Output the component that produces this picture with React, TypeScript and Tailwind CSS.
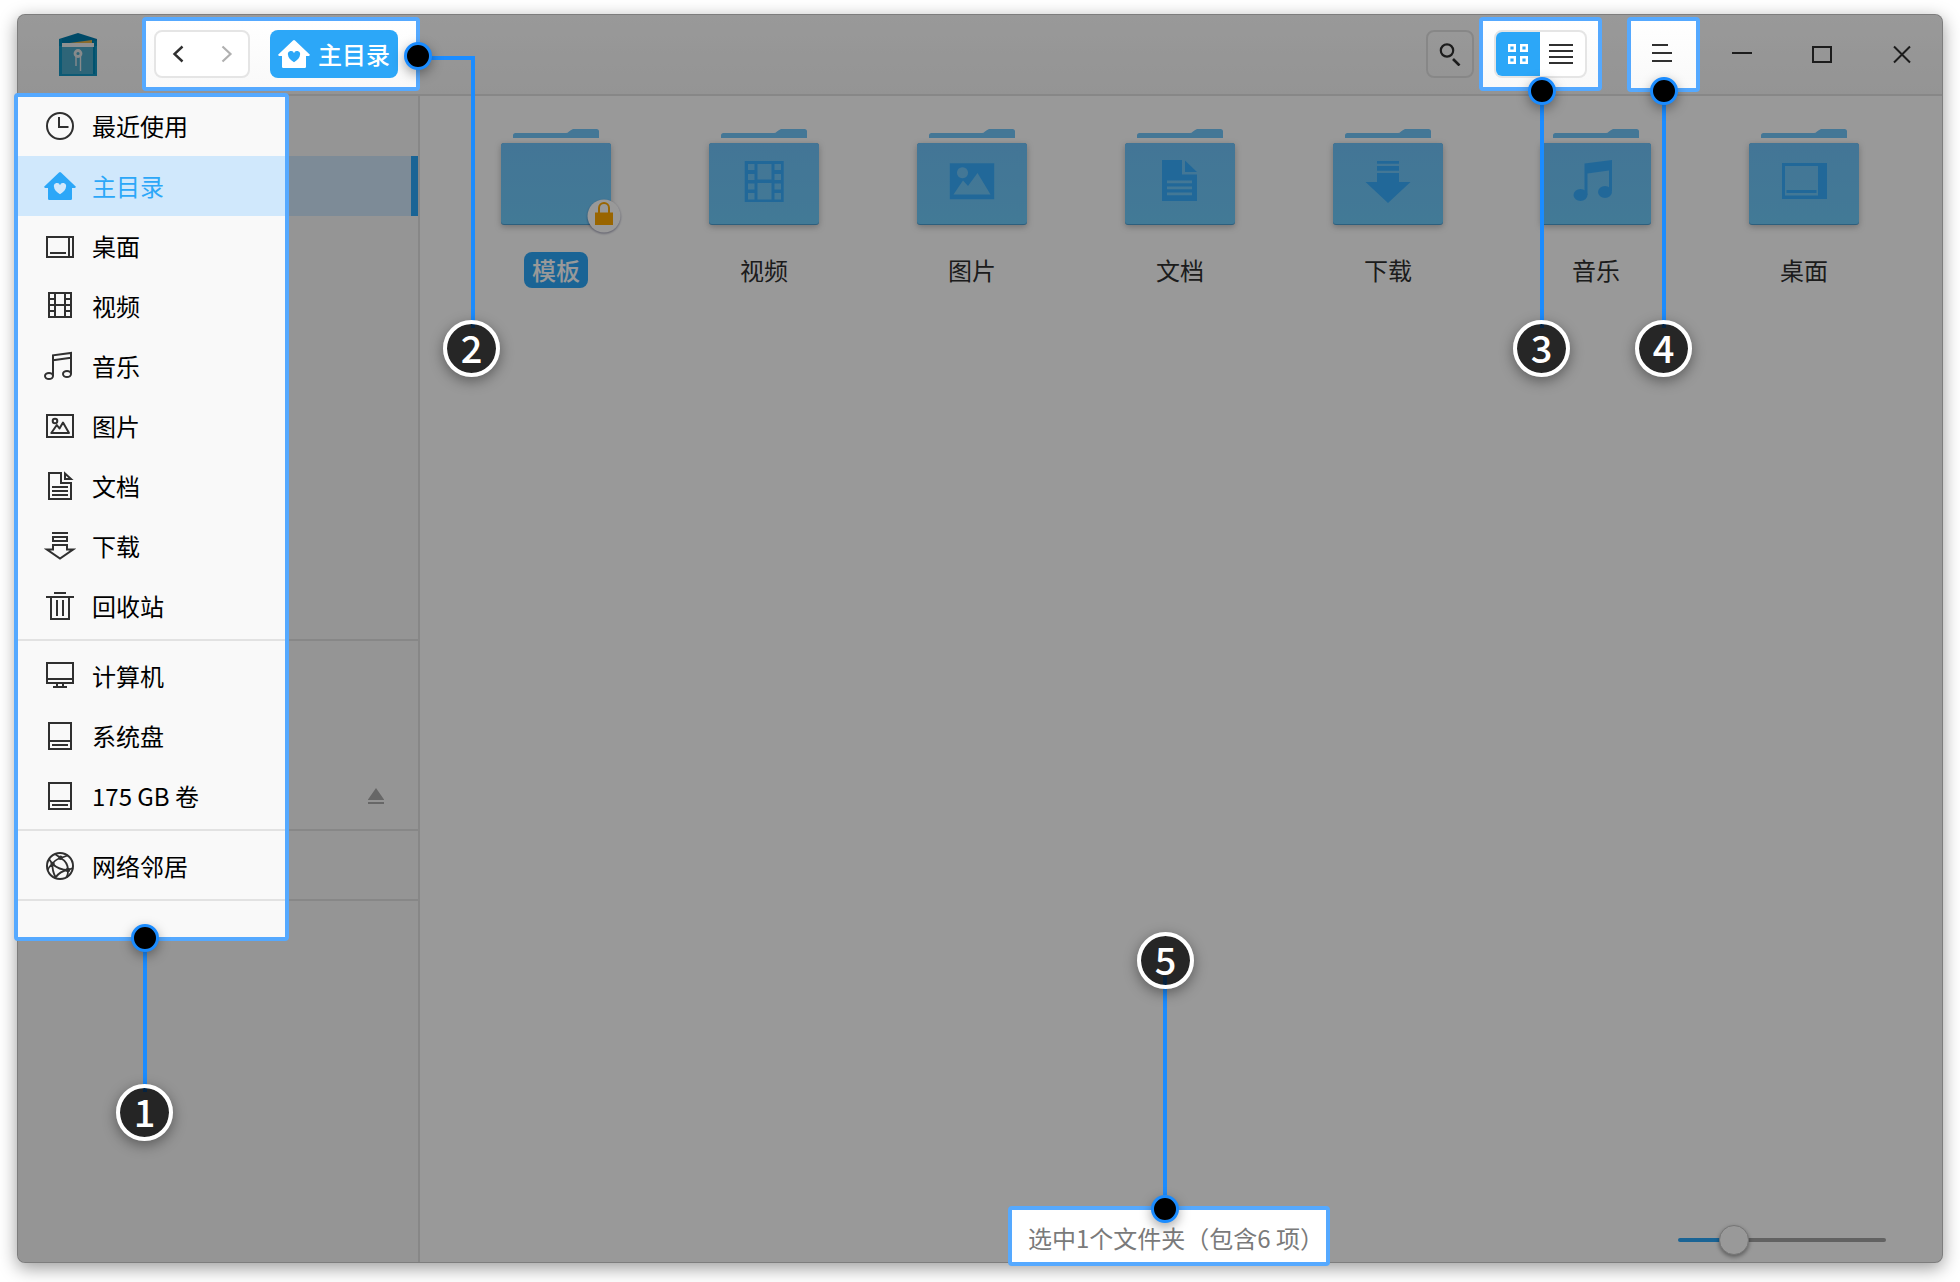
import { useState } from "react";
import type { ReactNode } from "react";

const FONT = "font-['Noto_Sans_CJK_SC',sans-serif]";

/* ---------- icons ---------- */

function LineIcon({ children, className = "" }: { children: ReactNode; className?: string }) {
  return (
    <svg viewBox="0 0 32 32" className={"size-8 shrink-0 " + className} fill="none" stroke="#303030" strokeWidth="2" aria-hidden="true">
      {children}
    </svg>
  );
}

function HomeIcon({ className = "" }: { className?: string }) {
  return (
    <svg viewBox="0 0 32 32" className={"size-8 shrink-0 " + className} aria-hidden="true">
      <path
        fill="currentColor"
        fillRule="evenodd"
        d="M15 2.400a1.400 1.400 0 0 1 2 0L31.700 16.400q.6 1.300-1 1.600H28v10.700q0 1.300-1.300 1.300H5.300Q4 30 4 28.700V18H1.300q-1.600-.3-1-1.600zM16 24.200c3.500-2.300 6-4.600 6-7.400a3 3 0 0 0-6-1.500 3 3 0 0 0-6 1.500c0 2.800 2.500 5.100 6 7.400z"
      />
    </svg>
  );
}

const icons: Record<string, ReactNode> = {
  recent: (
    <LineIcon>
      <circle cx="16" cy="16" r="13" />
      <path d="M15 7v10h9.500" />
    </LineIcon>
  ),
  home: <HomeIcon className="text-[#2ca7f8]" />,
  desktop: (
    <LineIcon>
      <rect x="3" y="7" width="26" height="20" />
      <path d="M25 7v20M6 23h16" />
    </LineIcon>
  ),
  video: (
    <LineIcon>
      <rect x="5" y="3" width="22" height="24" />
      <path d="M11 3v24M21 3v24M5 9h6M5 15h22M5 21h6M21 9h6M21 21h6" />
    </LineIcon>
  ),
  music: (
    <LineIcon>
      <path d="M9 26V5.300L27 3v21M9 10.200L27 7.800" />
      <ellipse cx="5" cy="26" rx="4" ry="3" />
      <ellipse cx="23" cy="24" rx="4" ry="3" />
    </LineIcon>
  ),
  pictures: (
    <LineIcon>
      <rect x="3" y="5" width="26" height="22" />
      <circle cx="11" cy="11" r="2.300" />
      <path d="M7.300 23l5.500-8 2.700 3.500L19 12.500 25 23z" strokeLinejoin="round" />
    </LineIcon>
  ),
  documents: (
    <LineIcon>
      <path d="M17 3H5v26h22V13H17zM21 3.500V9h6z" />
      <path d="M8 17h16M8 21h16M8 25h16" />
    </LineIcon>
  ),
  downloads: (
    <LineIcon>
      <path d="M8 3h16M9 7h14v4H9zM9 15h14v4.500h6L16 28.500 3 19.500h6z" />
    </LineIcon>
  ),
  trash: (
    <LineIcon>
      <path d="M10 3h12M2 7h28M7 7v22h18V7M13 10v16M19 10v16" />
    </LineIcon>
  ),
  computer: (
    <LineIcon>
      <path d="M3 3h26v20H3zM3 19h26M13 23v4M19 23v4M9 27h14" />
    </LineIcon>
  ),
  disk: (
    <LineIcon>
      <path d="M5 3h22v26H5zM5 21h22M8 25h16" />
    </LineIcon>
  ),
  network: (
    <LineIcon>
      <circle cx="16" cy="16" r="13" />
      <path
        strokeWidth="1.800"
        d="M11 4l5.700 4 6.800-2.500M16.500 8Q10.500 10 8.500 14M16.500 8Q24 12 24 20M8.500 14Q15 20 24 20M8.500 14L5 9M8.500 14Q4.500 17 3.800 20M8.500 14Q8 20 11.500 27.500M24 20l5-2M24 20q.3 4-1.500 7.500M24 20Q16 21 11.500 27.500"
      />
      <g fill="#303030" stroke="none">
        <circle cx="16.500" cy="7.800" r="2.200" />
        <circle cx="8.600" cy="14" r="2.200" />
        <circle cx="24" cy="20" r="2.300" />
      </g>
    </LineIcon>
  ),
};

function Logo() {
  return (
    <svg viewBox="0 0 40 44" className="h-11 w-10" aria-hidden="true">
      <path d="M1 6L20 0l19 6v8H1z" fill="#007cae" />
      <path d="M4 11l30-4v7H4z" fill="#e4b34a" />
      <path d="M1 13h38v29H1z" fill="#4ea8c8" />
      <path d="M1 6h3v36H1zM35 8h4v34h-4z" fill="#0089b8" />
      <path d="M1 13h3v29H1zM37 13h2v29h-2zM1 41h38v2H1z" fill="#1596c4" />
      <path d="M4 10h32v4H4z" fill="#eef0f2" />
      <circle cx="20" cy="20.500" r="3" fill="none" stroke="#e2e6e8" strokeWidth="2.800" />
      <path d="M18 23v10M22.500 23v15" stroke="#e2e6e8" strokeWidth="1.400" />
    </svg>
  );
}

const glyphs: Record<string, ReactNode> = {
  none: null,
  video: (
    <path
      fillRule="evenodd"
      d="M44.700 42h39v41h-39zM48 45v6h6.500v-6zM48 55v6h6.500v-6zM48 64.500v6h6.500v-6zM48 74v6.500h6.500V74zM57.500 45v15.500h14V45zM57.500 64v16.500h14V64zM74.500 45v6H81v-6zM74.500 55v6H81v-6zM74.500 64.500v6H81v-6zM74.500 74v6.500H81V74z"
    />
  ),
  pictures: (
    <path fillRule="evenodd" d="M41.800 44.200h44.400v36H41.800zM54.500 48.200a5.500 5.500 0 1 0 .01 0zM45.500 75.500h37L69.500 54 60 67l-5-5.500z" />
  ),
  documents: (
    <>
      <path fillRule="evenodd" d="M46 41h20v14.500h15V82H46zM51 61.500v2.700h25v-2.700zM51 67.500v2.700h25v-2.700zM51 73.500v2.700h25v-2.700z" />
      <path d="M69 41.500V53h12z" />
    </>
  ),
  downloads: <path d="M53 42h22v2.700H53zM53 47h22v4.700H53zM53 54h22v9h11.500L64 84 41.500 63H53z" />,
  music: (
    <>
      <path d="M52.500 44.500L80 41v31h-3V51.500l-21.500 3V76h-3z" />
      <ellipse cx="48.500" cy="76" rx="7" ry="6" />
      <ellipse cx="73" cy="73" rx="7" ry="6" />
    </>
  ),
  desktop: <path fillRule="evenodd" d="M42 44h45v36H42zM45 47v29.500h33V47zM46.500 71h30v3h-30z" />,
};

function FolderArt({ kind, locked }: { kind: string; locked?: boolean }) {
  return (
    <svg viewBox="0 0 128 112" className="h-28 w-32 overflow-visible" aria-hidden="true">
      <defs>
        <linearGradient id={"folder-" + kind} x1="0" y1="0" x2="0" y2="1">
          <stop offset="0" stopColor="#70c4fb" />
          <stop offset="1" stopColor="#6fcbfb" />
        </linearGradient>
      </defs>
      <path d="M21 18v-2.500q0-2.500 2.500-2.500H74q1.500 0 3-1.500t4-2.500h23.500q2.500 0 2.500 2.500V18z" fill="#72c6fb" />
      <path d="M15 23l3-5h92l3 5z" fill="#ffffff" />
      <g className="drop-shadow-[0_2px_3px_rgba(0,0,0,0.25)]">
        <rect x="9" y="23" width="110" height="82" rx="3" fill="#4c9ed0" />
        <rect x="9" y="23" width="110" height="81" rx="3" fill={"url(#folder-" + kind + ")"} />
      </g>
      <g fill="#38aeff" transform="translate(0 -1)">
        {glyphs[kind]}
      </g>
      {locked && (
        <>
          <circle cx="112" cy="96" r="16.500" fill="#ffffff" className="drop-shadow-[0_1px_1px_rgba(0,0,60,0.4)]" />
          <path d="M107 94v-6a5 5 0 0 1 10 0V94" fill="none" stroke="#ffa800" strokeWidth="2" />
          <path d="M103 92.500h18V105h-18z" fill="#ffa800" />
        </>
      )}
    </svg>
  );
}

/* ---------- callouts ---------- */

function Dot({ className = "" }: { className?: string }) {
  return (
    <span className={"size-7 shrink-0 rounded-full border-3 border-[#1b8cff] bg-black shadow-[0_4px_12px_rgba(0,0,0,0.35)] " + className} />
  );
}

function Badge({ n, className = "" }: { n: number; className?: string }) {
  return (
    <span
      className={
        "flex size-[57px] shrink-0 items-center justify-center rounded-full border-4 border-white bg-black/75 bg-clip-padding pb-1 text-[38px]/10 font-medium text-white shadow-[0_4px_14px_rgba(0,0,0,0.4)] " +
        className
      }
    >
      {n}
    </span>
  );
}

function CalloutDown({ n, line, className }: { n: number; line: string; className: string }) {
  return (
    <div className={"pointer-events-none absolute flex flex-col items-center " + className}>
      <Dot className="relative z-10" />
      <span className={"w-1 bg-[#1b8cff] " + line} />
      <Badge n={n} className="relative -mt-2" />
    </div>
  );
}

const SPOT = "relative z-20 border-4 border-[#55a9ff] rounded-sm";

/* ---------- data ---------- */

const groups = [
  [
    { icon: "recent", label: "最近使用" },
    { icon: "home", label: "主目录" },
    { icon: "desktop", label: "桌面" },
    { icon: "video", label: "视频" },
    { icon: "music", label: "音乐" },
    { icon: "pictures", label: "图片" },
    { icon: "documents", label: "文档" },
    { icon: "downloads", label: "下载" },
    { icon: "trash", label: "回收站" },
  ],
  [
    { icon: "computer", label: "计算机" },
    { icon: "disk", label: "系统盘" },
    { icon: "disk", label: "175 GB 卷", eject: true },
  ],
  [{ icon: "network", label: "网络邻居" }],
] as { icon: string; label: string; eject?: boolean }[][];

const folders = [
  { kind: "none", label: "模板", locked: true },
  { kind: "video", label: "视频" },
  { kind: "pictures", label: "图片" },
  { kind: "documents", label: "文档" },
  { kind: "downloads", label: "下载" },
  { kind: "music", label: "音乐" },
  { kind: "desktop", label: "桌面" },
];

/* ---------- page parts ---------- */

function Header() {
  return (
    <header className="flex shrink-0 items-start rounded-t-lg border-b-2 border-[#e2e2e2] bg-linear-to-b from-white to-[#f7f7f7]">
      <div className="mr-11 ml-10 flex h-[79px] items-center">
        <Logo />
      </div>
      <div className={SPOT + " mt-[2px] flex items-center bg-linear-to-b from-white to-[#f9f9f9] py-[9px] pr-[18px] pl-2"}>
        <div className="flex h-12 w-24 rounded-lg border-2 border-[#e5e5e5] bg-white">
          <button type="button" aria-label="后退" className="flex flex-1 items-center justify-center pr-[3px]">
            <svg viewBox="0 0 12 18" className="h-[18px] w-3" fill="none" stroke="#303030" strokeWidth="2.400">
              <path d="M10.500 1.500L2.500 9l8 7.500" />
            </svg>
          </button>
          <button type="button" aria-label="前进" className="flex flex-1 items-center justify-center pl-[3px]">
            <svg viewBox="0 0 12 18" className="h-[18px] w-3" fill="none" stroke="#b0b0b0" strokeWidth="2.200">
              <path d="M1.500 1.500L9.500 9l-8 7.500" />
            </svg>
          </button>
        </div>
        <button type="button" className="ml-5 flex h-12 items-center gap-2 rounded-lg bg-[#2ca7f8] px-2 text-2xl/9 font-medium text-white">
          <HomeIcon />
          主目录
        </button>
        <div className="pointer-events-none absolute top-[35px] left-[282px] h-[272px] w-[47px] border-t-4 border-r-4 border-[#1b8cff]" />
        <Dot className="absolute top-[21px] left-[258px]" />
        <Badge n={2} className="absolute top-[299px] left-[297px]" />
      </div>

      <div className="ml-auto flex items-start">
        <button type="button" aria-label="搜索" className="mt-[15px] mr-[5px] flex size-12 items-center justify-center rounded-lg border-2 border-[#e2e2e2]">
          <svg viewBox="0 0 24 24" className="size-6" fill="none" stroke="#303030" strokeWidth="2.200">
            <circle cx="9" cy="8.500" r="6.200" />
            <path d="M15 17l6.500 6.500" strokeWidth="2.600" />
          </svg>
        </button>
        <div className={SPOT + " mt-[2px] bg-linear-to-b from-white to-[#f9f9f9] px-[11px] py-[9px]"}>
          <div className="flex h-12 rounded-lg border-2 border-[#e5e5e5] bg-white">
            <button type="button" aria-label="图标视图" className="flex w-11 items-center justify-center rounded-l-md bg-[#2ca7f8]">
              <svg viewBox="0 0 20 20" className="size-5" fill="none" stroke="#fff" strokeWidth="2.400">
                <path d="M1.200 1.200h5.600v5.600H1.200zM13.200 1.200h5.600v5.600h-5.600zM1.200 13.200h5.600v5.600H1.200zM13.200 13.200h5.600v5.600h-5.600z" />
              </svg>
            </button>
            <button type="button" aria-label="列表视图" className="flex w-[45px] items-center justify-center pr-[3px]">
              <svg viewBox="0 0 24 20" className="h-5 w-6" stroke="#303030" strokeWidth="2">
                <path d="M0 1h24M0 7h24M0 13h24M0 19h24" />
              </svg>
            </button>
          </div>
          <CalloutDown n={3} line="h-[223px]" className="top-14 left-[30px]" />
        </div>
        <div className={SPOT + " mt-[2px] ml-[25px] bg-linear-to-b from-white to-[#f9f9f9]"}>
          <button type="button" aria-label="菜单" className="flex h-[67px] w-[65px] items-center justify-center pr-[3px] pb-[3px]">
            <svg viewBox="0 0 20 18" className="h-[18px] w-5" stroke="#303030" strokeWidth="2">
              <path d="M0 1h16M0 9h20M0 17h20" />
            </svg>
          </button>
          <CalloutDown n={4} line="h-[223px]" className="top-14 left-1" />
        </div>
        <div className="ml-[2px] flex h-[79px] items-center">
          <button type="button" aria-label="最小化" className="flex h-12 w-20 items-center justify-center">
            <svg viewBox="0 0 20 20" className="size-5" stroke="#303030" strokeWidth="2">
              <path d="M0 8h20" />
            </svg>
          </button>
          <button type="button" aria-label="最大化" className="flex h-12 w-20 items-center justify-center">
            <svg viewBox="0 0 20 20" className="size-5" fill="none" stroke="#303030" strokeWidth="2">
              <path d="M1 2h18v15H1z" />
            </svg>
          </button>
          <button type="button" aria-label="关闭" className="flex h-12 w-20 items-center justify-center">
            <svg viewBox="0 0 20 20" className="size-5" stroke="#303030" strokeWidth="2">
              <path d="M2 1.500l16 16M18 1.500l-16 16" />
            </svg>
          </button>
        </div>
      </div>
    </header>
  );
}

function Sidebar() {
  return (
    <aside className="w-[402px] shrink-0 rounded-bl-lg border-r-2 border-[#e2e2e2] bg-[#f9f9f9]">
      <nav aria-label="位置" className="relative z-20 bg-[#f9f9f9] pb-[31px]">
        {groups.map((group, g) => (
          <ul key={g} className="mb-[5px] border-b-2 border-[#e2e2e2] pb-[3px]">
            {group.map((item) => {
              const active = item.icon === "home";
              return (
                <li key={item.label} className={"flex h-[60px] items-center " + (active ? "border-r-[7px] border-[#2ca7f8] bg-[#d0e8fc]" : "")}>
                  <a href="#" className={"flex h-full flex-1 items-center gap-4 pl-[26px] text-2xl/9 " + (active ? "text-[#2ca7f8]" : "text-black")}>
                    {icons[item.icon]}
                    {item.label}
                  </a>
                  {item.eject && (
                    <button type="button" aria-label="弹出" className="mr-[34px]">
                      <svg viewBox="0 0 16 16" className="size-4" fill="#acacac">
                        <path d="M8 0l8 11.500v.5H0v-.5zM0 14h16v2H0z" />
                      </svg>
                    </button>
                  )}
                </li>
              );
            })}
          </ul>
        ))}
        <div className="pointer-events-none absolute inset-y-0 right-0 left-[269px] bg-black/40" />
        <div className="pointer-events-none absolute -top-[3px] -bottom-1 -left-1 w-[275px] rounded-sm border-4 border-[#55a9ff]">
          <CalloutDown n={1} line="h-[140px]" className="-bottom-[204px] left-[98px]" />
        </div>
      </nav>
    </aside>
  );
}

function StatusBar() {
  const [zoom, setZoom] = useState(23);
  return (
    <footer className="-mb-1 grid h-[60px] shrink-0 grid-cols-[1fr_auto_1fr] items-center pr-6">
      <p className={SPOT + " col-start-2 flex h-[60px] items-center bg-white pt-1 pr-[2px] pl-4 text-2xl/9 text-[#7a7a7a]"}>
        选中1个文件夹（包含6 项）
        <span className="pointer-events-none absolute -top-[278px] left-[125px] flex flex-col items-center">
          <Badge n={5} className="relative z-10" />
          <span className="-mt-[13px] h-[219px] w-1 bg-[#1b8cff]" />
          <Dot />
        </span>
      </p>
      <input
        type="range"
        aria-label="图标大小"
        min={0}
        max={100}
        value={zoom}
        onChange={(e) => setZoom(Number(e.target.value))}
        className="mt-2 mr-8 h-1 w-52 appearance-none justify-self-end rounded-full bg-[#a3a3a3] bg-linear-to-r from-[#2ca7f8] from-27% to-[#a3a3a3] to-27% [&::-webkit-slider-thumb]:size-[30px] [&::-webkit-slider-thumb]:appearance-none [&::-webkit-slider-thumb]:rounded-full [&::-webkit-slider-thumb]:border [&::-webkit-slider-thumb]:border-[#c4c4c4] [&::-webkit-slider-thumb]:bg-white [&::-webkit-slider-thumb]:shadow-[0_2px_4px_rgba(0,0,0,0.4)]"
      />
    </footer>
  );
}

export default function App() {
  return (
    <div className={"flex min-h-screen bg-white px-[17px] pt-[14px] pb-[19px] " + FONT}>
      <div className="relative isolate flex flex-1 flex-col rounded-lg border border-[#d0d0d0] bg-white shadow-[0_5px_18px_rgba(0,0,0,0.4)]">
        <Header />
        <div className="flex flex-1">
          <Sidebar />
          <main className="flex min-w-0 flex-1 flex-col">
            <ul className="flex flex-1 flex-wrap content-start px-8 pt-6">
              {folders.map((f) => (
                <li key={f.kind} className="w-52">
                  <button type="button" className="flex w-full flex-col items-center gap-5">
                    <FolderArt kind={f.kind} locked={f.locked} />
                    <span className={"rounded-lg px-2 text-2xl/9 " + (f.locked ? "bg-[#2ca7f8] font-medium text-white" : "text-[#303030]")}>
                      {f.label}
                    </span>
                  </button>
                </li>
              ))}
            </ul>
            <StatusBar />
          </main>
        </div>
        <div className="pointer-events-none absolute -inset-px z-10 rounded-lg bg-black/40" />
      </div>
    </div>
  );
}
